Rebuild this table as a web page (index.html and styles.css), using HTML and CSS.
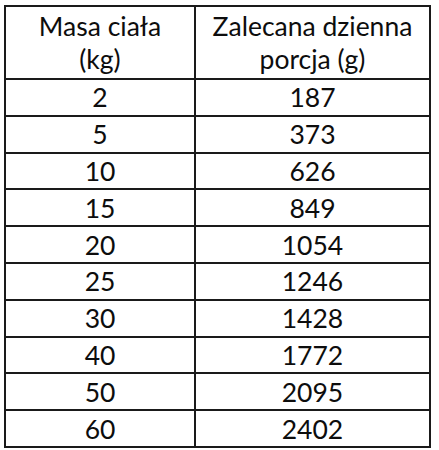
FILE: index.html
```html
<!DOCTYPE html>
<html lang="pl">
<head>
<meta charset="utf-8">
<link rel="stylesheet" href="styles.css">
</head>
<body>
<table class="portions">
  <thead>
    <tr>
      <th class="col-mass">Masa ciała<br>(kg)</th>
      <th class="col-portion">Zalecana dzienna<br>porcja (g)</th>
    </tr>
  </thead>
  <tbody>
    <tr><td>2</td><td>187</td></tr>
    <tr><td>5</td><td>373</td></tr>
    <tr><td>10</td><td>626</td></tr>
    <tr><td>15</td><td>849</td></tr>
    <tr><td>20</td><td>1054</td></tr>
    <tr><td>25</td><td>1246</td></tr>
    <tr><td>30</td><td>1428</td></tr>
    <tr><td>40</td><td>1772</td></tr>
    <tr><td>50</td><td>2095</td></tr>
    <tr><td>60</td><td>2402</td></tr>
  </tbody>
</table>
</body>
</html>
```

FILE: styles.css
```css
html, body {
  margin: 0;
  padding: 0;
  background: #ffffff;
}

body {
  padding: 5px 0 0 4px;
  font-family: Lato, "Liberation Sans", sans-serif;
  color: #0d0d0d;
}

.portions {
  border-collapse: collapse;
  table-layout: fixed;
  width: 427px;
}

.portions th,
.portions td {
  border: 2px solid #1a1a1a;
  padding: 0;
  text-align: center;
  font-weight: normal;
  font-size: 26.5px;
}

.portions th {
  height: 71px;
  line-height: 33px;
}

.portions td {
  height: 34.8px;
  line-height: 34px;
}

.col-mass {
  width: 188px;
}
```
